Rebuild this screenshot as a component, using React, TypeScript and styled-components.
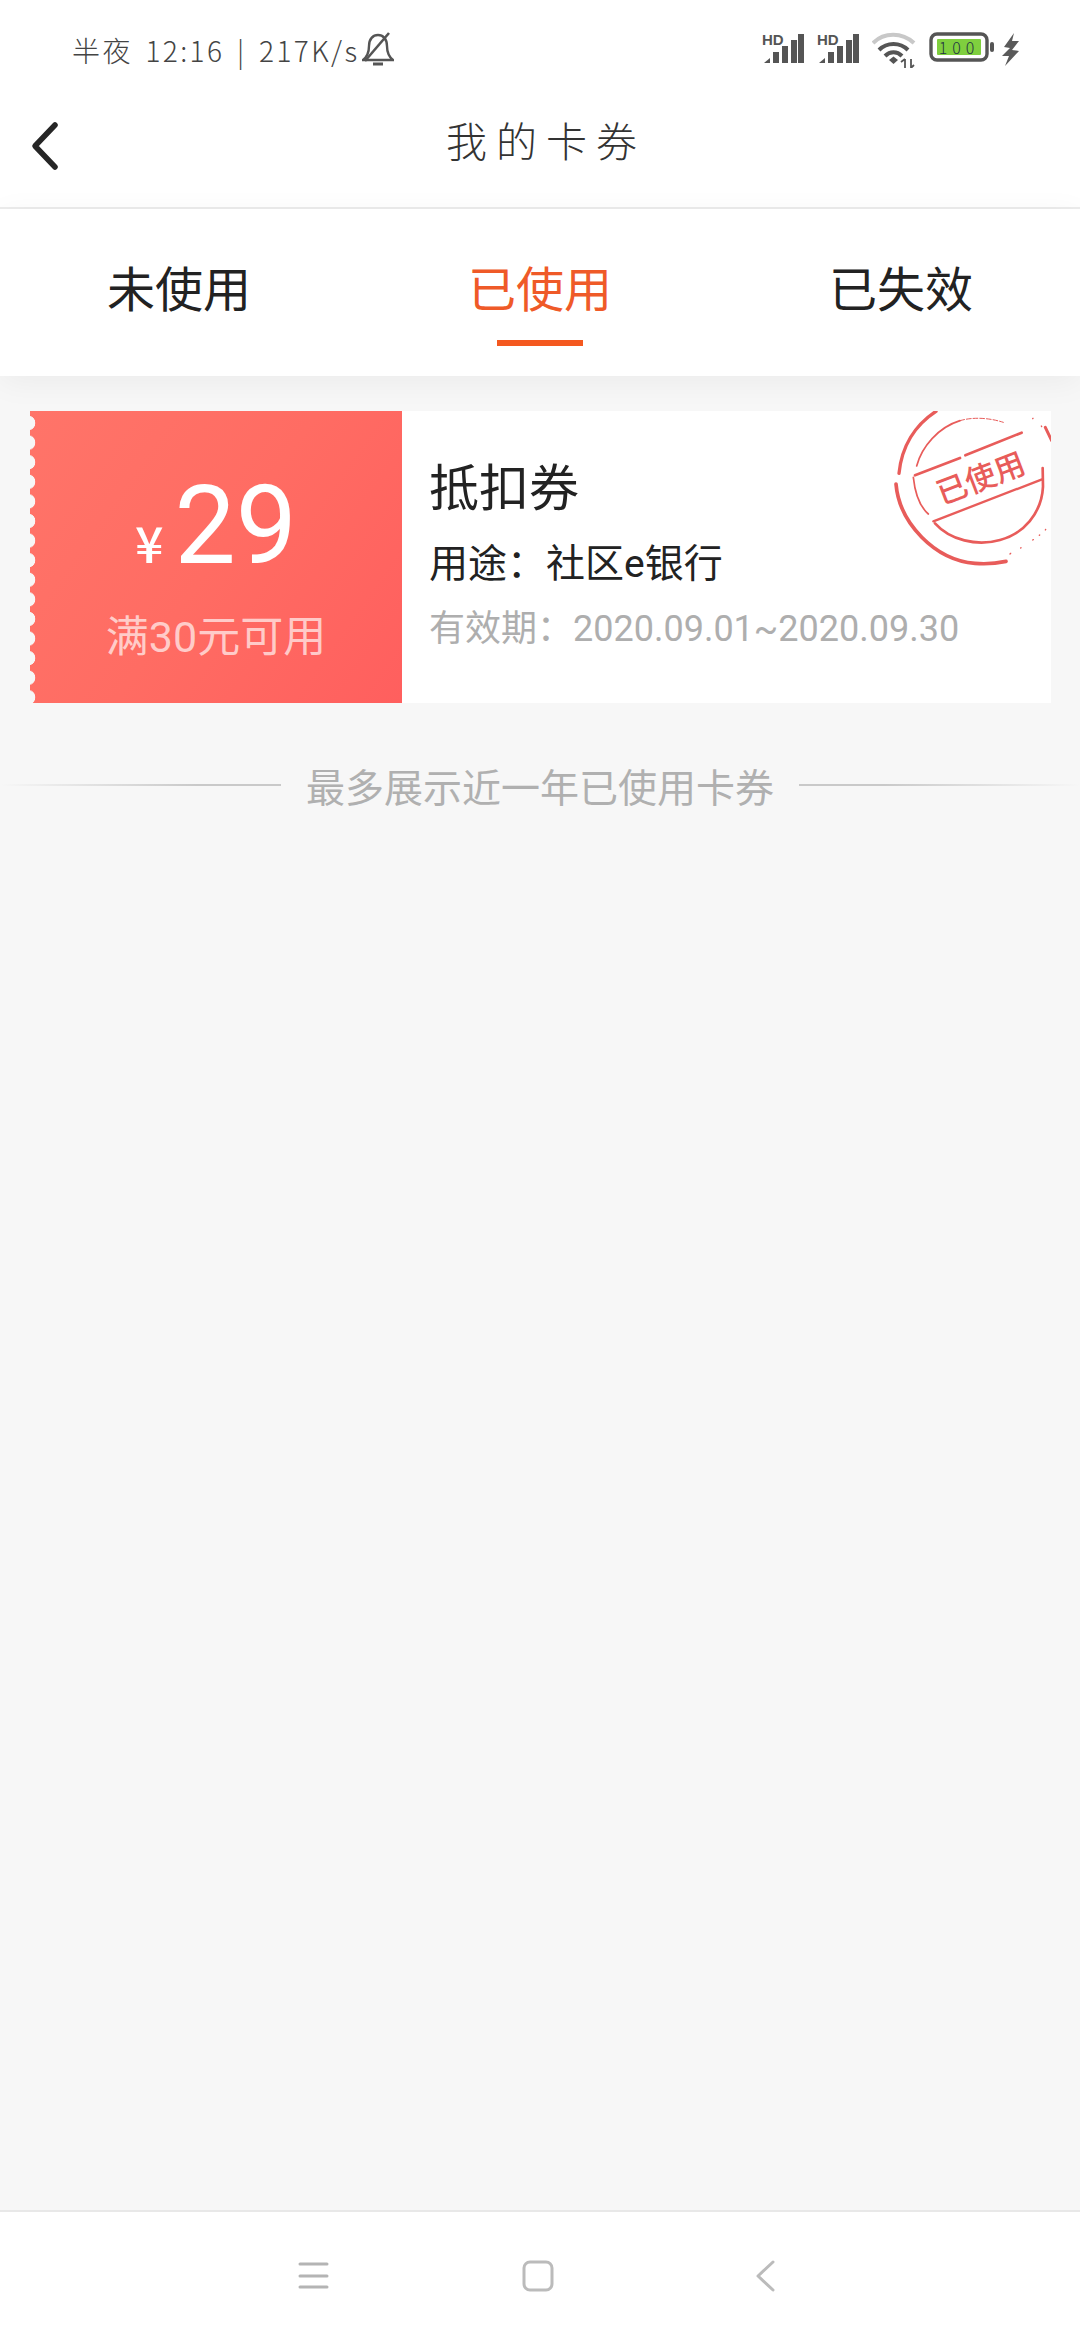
import React from "react";
import styled, { createGlobalStyle } from "styled-components";

const CJK = `"Noto Sans CJK SC", "Noto Sans", sans-serif`;
const NUM = `Roboto, "Noto Sans CJK SC", sans-serif`;

const GlobalStyle = createGlobalStyle`
  html, body {
    margin: 0;
    padding: 0;
    background: #f7f7f7;
  }
  * {
    box-sizing: border-box;
  }
`;

const Page = styled.div`
  width: 1080px;
  height: 2340px;
  display: flex;
  flex-direction: column;
  background: #f7f7f7;
  font-family: ${NUM};
  overflow: hidden;
`;

const StatusBar = styled.div`
  height: 80px;
  flex: none;
  background: #fff;
  display: flex;
  justify-content: space-between;
  padding: 32px 60px 0 72px;
`;

const StatusLeft = styled.div`
  display: flex;
  align-items: flex-start;
  gap: 3px;
`;

const Clock = styled.span`
  font-family: ${CJK};
  font-size: 28px;
  font-weight: 300;
  line-height: 36px;
  letter-spacing: 2.4px;
  word-spacing: 4px;
  color: #444;
  white-space: pre;
`;

const StatusRight = styled.div`
  display: flex;
  align-items: flex-start;
  gap: 13px;
`;

const Header = styled.header`
  height: 129px;
  flex: none;
  background: #fff;
  border-bottom: 2px solid #ececec;
  display: flex;
  align-items: center;
  justify-content: center;
  position: relative;
`;

const BackButton = styled.div`
  position: absolute;
  left: 30px;
  top: 41px;
  width: 30px;
  height: 52px;
`;

const Title = styled.h1`
  margin: 0;
  font-family: ${CJK};
  font-size: 41px;
  font-weight: 300;
  letter-spacing: 9px;
  color: #333;
  padding: 0 0 9px 12px;
`;

const Tabs = styled.nav`
  height: 167px;
  flex: none;
  background: #fff;
  display: flex;
  justify-content: space-between;
  padding: 22px 107px 0;
  box-shadow: 0 6px 30px rgba(0, 0, 0, 0.05);
  position: relative;
`;

const Tab = styled.div<{ $active?: boolean }>`
  position: relative;
  height: 66px;
  margin-top: 22px;
  font-family: ${CJK};
  font-size: 48px;
  line-height: 66px;
  white-space: nowrap;
  color: ${(p) => (p.$active ? "#ef5a28" : "#222")};
`;

const Underline = styled.span`
  position: absolute;
  left: 50%;
  top: 87px;
  width: 86px;
  height: 6px;
  margin-left: -43px;
  background: #f4581f;
`;

const Content = styled.main`
  flex: 1;
  padding: 35px 29px 0 30px;
  display: flex;
  flex-direction: column;
`;

const Coupon = styled.article`
  height: 292px;
  display: flex;
  background: #fff;
  position: relative;
  overflow: hidden;
`;

const Amount = styled.div`
  width: 372px;
  flex: none;
  position: relative;
  background: linear-gradient(125deg, #ff7469 0%, #ff6c63 50%, #ff5f5e 100%);
  display: flex;
  flex-direction: column;
  align-items: center;
  padding-top: 52px;
`;

const Perforation = styled.span`
  position: absolute;
  left: 0;
  top: 0;
  bottom: 0;
  width: 6px;
  background: radial-gradient(circle at -2px 50%, #f7f7f7 7px, rgba(247, 247, 247, 0) 7.6px) 0 2.2px / 6px 19.6px repeat-y;
`;

const Price = styled.div`
  display: flex;
  align-items: baseline;
  gap: 11px;
  color: #fff;
`;

const Yen = styled.span`
  font-family: ${CJK};
  font-size: 50px;
  font-weight: 500;
  line-height: 1;
`;

const PriceValue = styled.span`
  font-size: 109px;
  line-height: 126px;
`;

const Threshold = styled.div`
  font-family: ${NUM};
  font-size: 43px;
  line-height: 50px;
  margin-top: 23px;
  color: rgba(255, 255, 255, 0.66);
`;

const Info = styled.div`
  flex: 1;
  padding: 37px 0 0 27px;
  display: flex;
  flex-direction: column;
  position: relative;
`;

const CouponName = styled.div`
  font-family: ${CJK};
  font-size: 50px;
  line-height: 72px;
  color: #222;
`;

const Usage = styled.div`
  font-family: ${NUM};
  font-size: 39px;
  line-height: 56px;
  margin-top: 16px;
  color: #222;
`;

const Validity = styled.div`
  font-family: ${NUM};
  font-size: 36px;
  line-height: 52px;
  margin-top: 11px;
  color: #aeaeae;
`;

const Stamp = styled.svg`
  position: absolute;
  right: -29px;
  top: -21px;
  width: 220px;
  height: 200px;
`;

const Notice = styled.div`
  margin: 54px -29px 0 -30px;
  display: flex;
  align-items: center;
  gap: 25px;
  height: 56px;
`;

const NoticeLine = styled.span<{ $flip?: boolean }>`
  flex: 1;
  height: 2px;
  background: linear-gradient(
    ${(p) => (p.$flip ? "to left" : "to right")},
    rgba(200, 200, 200, 0),
    #c9c9c9 70%,
    #c9c9c9 100%
  );
`;

const NoticeText = styled.span`
  font-family: ${CJK};
  font-size: 39px;
  line-height: 56px;
  color: #b0b0b0;
`;

const NavBar = styled.footer`
  height: 130px;
  flex: none;
  background: #fff;
  border-top: 2px solid #e8e8e8;
  display: grid;
  grid-template-columns: 297px 225px 234px 1fr;
  padding-top: 48px;
`;

const NavIcon = styled.svg<{ $col: number }>`
  grid-column: ${(p) => p.$col};
  width: 32px;
  height: 32px;
`;

const Signal = () => (
  <svg width="42" height="32" viewBox="0 0 42 32">
    <text x="0" y="13" fontFamily="Liberation Sans" fontWeight="700" fontSize="15" fill="#555">
      HD
    </text>
    <path d="M2 31 L8 26 V31 Z" fill="#555" />
    <rect x="11" y="20" width="6" height="11" fill="#555" />
    <rect x="20" y="14" width="6" height="17" fill="#555" />
    <rect x="29" y="8" width="6" height="23" fill="#555" />
    <rect x="36" y="2" width="6" height="29" fill="#555" />
  </svg>
);

const App: React.FC = () => {
  return (
    <Page>
      <GlobalStyle />
      <StatusBar>
        <StatusLeft>
          <Clock>半夜 12:16 | 217K/s</Clock>
          <svg width="32" height="34" viewBox="0 0 32 34" fill="none" stroke="#555" strokeWidth="2.4">
            <path d="M1 28 C6 24 7 20 7 14 C7 7 11 3 16 3 C21 3 25 7 25 14 C25 20 26 24 31 28 Z" />
            <path d="M3 29 L27 1" strokeWidth="2.6" />
            <path d="M11 32 H21" strokeWidth="3" />
          </svg>
        </StatusLeft>
        <StatusRight>
          <Signal />
          <Signal />
          <svg width="44" height="36" viewBox="0 0 44 36" fill="none" strokeLinecap="butt">
            <path d="M1 11 C12 0 30 0 42 11" stroke="#c8c8c8" strokeWidth="4" />
            <path d="M7 18 C15 10 28 10 36 18" stroke="#555" strokeWidth="4" />
            <path d="M13 24 C18 19 25 19 30 24" stroke="#555" strokeWidth="4" />
            <path d="M17 28 L21.5 24.5 L26 28 L21.5 32 Z" fill="#555" />
            <path d="M33 27 V36 M29 30 L33 27 M39 27 V36 L42 33" stroke="#555" strokeWidth="1.8" />
          </svg>
          <svg width="66" height="30" viewBox="0 0 66 30">
            <rect x="2" y="2" width="56" height="26" rx="6" fill="#fff" stroke="#555" strokeWidth="3.4" />
            <rect x="8" y="7" width="44" height="16" rx="1" fill="#7fcf3e" />
            <rect x="61" y="10" width="4" height="10" rx="2" fill="#555" />
            <text x="30" y="21.5" textAnchor="middle" fontFamily="Noto Sans CJK SC" fontWeight="300" fontSize="16" letterSpacing="5" fill="#234">
              100
            </text>
          </svg>
          <svg width="18" height="34" viewBox="0 0 18 34" style={{ marginLeft: -6 }}>
            <path d="M12 1 L2 15 L8 16 L0 24 L7 24 L3 34 L17 19 L10 18 L17 9 L10 9 Z" fill="#5a5a5a" />
          </svg>
        </StatusRight>
      </StatusBar>

      <Header>
        <BackButton>
          <svg width="30" height="52" viewBox="0 0 30 52" fill="none">
            <path d="M25 4 L5 25 L25 46" stroke="#262626" strokeWidth="5.5" strokeLinecap="round" strokeLinejoin="round" />
          </svg>
        </BackButton>
        <Title>我的卡券</Title>
      </Header>

      <Tabs>
        <Tab>未使用</Tab>
        <Tab $active>
          已使用
          <Underline />
        </Tab>
        <Tab>已失效</Tab>
      </Tabs>

      <Content>
        <Coupon>
          <Amount>
            <Perforation />
            <Price>
              <Yen>¥</Yen>
              <PriceValue>29</PriceValue>
            </Price>
            <Threshold>满30元可用</Threshold>
          </Amount>
          <Info>
            <CouponName>抵扣券</CouponName>
            <Usage>用途：社区e银行</Usage>
            <Validity>有效期：2020.09.01~2020.09.30</Validity>
          </Info>
          <Stamp viewBox="0 0 660 600" fill="none" stroke="#e85c5a" strokeLinecap="round">
            <path d="M228 64 C165 105 125 170 117 250" strokeWidth="10" />
            <path d="M108 282 C118 400 225 510 345 520 C380 523 410 520 438 514" strokeWidth="11" />
            <path d="M556 112 L575 152" strokeWidth="9" />
            <path d="M170 228 C185 170 235 112 300 92" strokeWidth="5" />
            <path d="M300 92 C340 80 390 84 430 97" strokeWidth="3" strokeDasharray="14 6" />
            <path d="M160 262 C165 310 180 350 205 372" strokeWidth="5" />
            <path d="M225 400 C270 450 350 470 420 450 C490 432 545 370 549 290 L548 234" strokeWidth="8" />
            <path d="M165 256 L300 204 M316 196 L485 128" strokeWidth="8" />
            <path d="M220 394 L546 268" strokeWidth="7" />
            <path d="M450 492 L452 490 M482 474 L483 473 M518 450 L520 449 M538 436 L539 435 M556 420 L557 418 M545 110 L544 108 M518 86 L519 85" strokeWidth="4" />
            <text
              x="362"
              y="298"
              textAnchor="middle"
              transform="rotate(-21 362 265)"
              fontFamily="Noto Sans CJK SC"
              fontSize="92"
              fontWeight="500"
              fill="#e85c5a"
              stroke="none"
            >
              已使用
            </text>
          </Stamp>
        </Coupon>
        <Notice>
          <NoticeLine />
          <NoticeText>最多展示近一年已使用卡券</NoticeText>
          <NoticeLine $flip />
        </Notice>
      </Content>

      <NavBar>
        <NavIcon $col={2} viewBox="0 0 32 32" fill="none" stroke="#b4b4b4" strokeWidth="3" strokeLinecap="round">
          <path d="M3 4 H30 M3 16 H30 M3 27 H30" />
        </NavIcon>
        <NavIcon $col={3} viewBox="0 0 32 32" fill="none" stroke="#bbbbbb" strokeWidth="3">
          <rect x="2" y="2" width="28" height="28" rx="6" />
        </NavIcon>
        <NavIcon $col={4} viewBox="0 0 32 32" fill="none" stroke="#bbbbbb" strokeWidth="3" strokeLinecap="round" strokeLinejoin="round">
          <path d="M17 2 L2 16 L17 30" />
        </NavIcon>
      </NavBar>
    </Page>
  );
};

export default App;
